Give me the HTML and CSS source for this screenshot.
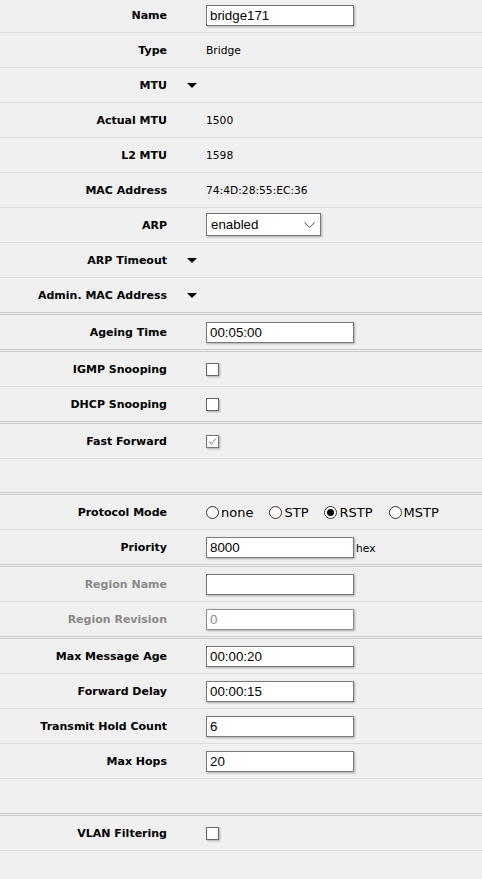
FILE: index.html
```html
<!DOCTYPE html>
<html>
<head>
<meta charset="utf-8">
<link rel="stylesheet" href="styles.css">
</head>
<body>
<div class="form">
  <div class="group first">
    <div class="row"><div class="label">Name</div><div class="arrow"></div><div class="value"><input class="text" type="text" value="bridge171"></div></div>
    <div class="row"><div class="label">Type</div><div class="arrow"></div><div class="value"><span class="plain">Bridge</span></div></div>
    <div class="row"><div class="label">MTU</div><div class="arrow"><span class="tri"></span></div><div class="value"></div></div>
    <div class="row"><div class="label">Actual MTU</div><div class="arrow"></div><div class="value"><span class="plain">1500</span></div></div>
    <div class="row"><div class="label">L2 MTU</div><div class="arrow"></div><div class="value"><span class="plain">1598</span></div></div>
    <div class="row"><div class="label">MAC Address</div><div class="arrow"></div><div class="value"><span class="plain">74:4D:28:55:EC:36</span></div></div>
    <div class="row"><div class="label">ARP</div><div class="arrow"></div><div class="value">
      <div class="select"><span>enabled</span><svg class="chev" width="11" height="6" viewBox="0 0 11 6"><path d="M0.5 0.5 L5.5 5.5 L10.5 0.5" fill="none" stroke="#555" stroke-width="1"/></svg></div>
    </div></div>
    <div class="row"><div class="label">ARP Timeout</div><div class="arrow"><span class="tri"></span></div><div class="value"></div></div>
    <div class="row"><div class="label">Admin. MAC Address</div><div class="arrow"><span class="tri"></span></div><div class="value"></div></div>
  </div>
  <div class="group">
    <div class="row"><div class="label">Ageing Time</div><div class="arrow"></div><div class="value"><input class="text" type="text" value="00:05:00"></div></div>
  </div>
  <div class="group">
    <div class="row"><div class="label">IGMP Snooping</div><div class="arrow"></div><div class="value"><span class="check"></span></div></div>
    <div class="row"><div class="label">DHCP Snooping</div><div class="arrow"></div><div class="value"><span class="check"></span></div></div>
  </div>
  <div class="group">
    <div class="row"><div class="label">Fast Forward</div><div class="arrow"></div><div class="value"><span class="check checked"><svg width="11" height="11" viewBox="0 0 11 11"><path d="M2 5.5 L4.5 8 L9 2.5" fill="none" stroke="#9a9a9a" stroke-width="1.1"/></svg></span></div></div>
    <div class="row short"></div>
  </div>
  <div class="group">
    <div class="row"><div class="label">Protocol Mode</div><div class="arrow"></div><div class="value">
      <div class="radios">
        <span class="radio"><span class="dot"></span>none</span>
        <span class="radio"><span class="dot"></span>STP</span>
        <span class="radio"><span class="dot on"></span>RSTP</span>
        <span class="radio"><span class="dot"></span>MSTP</span>
      </div>
    </div></div>
    <div class="row"><div class="label">Priority</div><div class="arrow"></div><div class="value"><input class="text" type="text" value="8000"><span class="unit">hex</span></div></div>
  </div>
  <div class="group">
    <div class="row"><div class="label dim">Region Name</div><div class="arrow"></div><div class="value"><input class="text" type="text" value=""></div></div>
    <div class="row"><div class="label dim">Region Revision</div><div class="arrow"></div><div class="value"><input class="text disabled" type="text" value="0"></div></div>
  </div>
  <div class="group">
    <div class="row"><div class="label">Max Message Age</div><div class="arrow"></div><div class="value"><input class="text" type="text" value="00:00:20"></div></div>
    <div class="row"><div class="label">Forward Delay</div><div class="arrow"></div><div class="value"><input class="text" type="text" value="00:00:15"></div></div>
    <div class="row"><div class="label">Transmit Hold Count</div><div class="arrow"></div><div class="value"><input class="text" type="text" value="6"></div></div>
    <div class="row"><div class="label">Max Hops</div><div class="arrow"></div><div class="value"><input class="text" type="text" value="20"></div></div>
    <div class="row"></div>
  </div>
  <div class="group last">
    <div class="row"><div class="label">VLAN Filtering</div><div class="arrow"></div><div class="value"><span class="check"></span></div></div>
  </div>
</div>
</body>
</html>
```
FILE: styles.css
```css
html, body {
  margin: 0;
  padding: 0;
  background: #f0f0f0;
}
body {
  font-family: "DejaVu Sans", Verdana, sans-serif;
  color: #000;
}
.form {
  margin-top: -2px;
}
.group {
  border-top: 1px solid #c9c9c9;
  margin-top: 1px;
}
.group.first {
  border-top: none;
  margin-top: 0;
}
.row {
  display: grid;
  grid-template-columns: 167px 39px 1fr;
  align-items: center;
  height: 34px;
  border-bottom: 1px solid #dcdcdc;
}
.group .row:last-child {
  border-bottom-color: #c9c9c9;
}
.group.last .row:last-child {
  border-bottom-color: #dcdcdc;
}
.row.short {
  height: 33px;
}
.label {
  text-align: right;
  font-weight: bold;
  font-size: 11px;
  white-space: nowrap;
}
.label.dim {
  color: #8a8a8a;
}
.arrow {
  display: flex;
  align-items: center;
  padding-left: 20px;
  padding-top: 1px;
}
.tri {
  width: 0;
  height: 0;
  border-left: 5px solid transparent;
  border-right: 5px solid transparent;
  border-top: 5px solid #000;
}
.value {
  display: flex;
  align-items: center;
}
.plain {
  font-size: 10.7px;
}
.text {
  box-sizing: border-box;
  width: 148px;
  height: 21px;
  margin: 0;
  padding: 0 3px;
  border: 1px solid #7a7a7a;
  background: #fff;
  box-shadow: 1px 1px 2px rgba(0, 0, 0, 0.3);
  font-family: "Liberation Sans", Arial, sans-serif;
  font-size: 13.33px;
  color: #000;
  outline: none;
}
.text.disabled {
  color: #8a8a8a;
  border-color: #8f8f8f;
}
.unit {
  font-size: 10.7px;
  margin-left: 2px;
  padding-top: 2px;
}
.select {
  box-sizing: border-box;
  width: 115px;
  height: 23px;
  margin-top: -1px;
  border: 1px solid #7a7a7a;
  background: #fff;
  box-shadow: 1px 1px 2px rgba(0, 0, 0, 0.3);
  display: flex;
  align-items: center;
  justify-content: space-between;
  padding: 0 5px 0 4px;
  font-family: "Liberation Sans", Arial, sans-serif;
  font-size: 13.33px;
}
.chev {
  display: block;
}
.check {
  box-sizing: border-box;
  width: 13px;
  height: 13px;
  border: 1px solid #666;
  background: #fff;
  box-shadow: 1px 1px 2px rgba(0, 0, 0, 0.3);
  display: flex;
  align-items: center;
  justify-content: center;
}
.check.checked {
  border-color: #777;
}
.check svg {
  display: block;
}
.radios {
  display: flex;
  align-items: center;
  gap: 16px;
  font-size: 13px;
}
.radio {
  display: flex;
  align-items: center;
  gap: 2px;
}
.dot {
  box-sizing: border-box;
  width: 13px;
  height: 13px;
  border: 1px solid #333;
  border-radius: 50%;
  background: #fff;
  display: flex;
  align-items: center;
  justify-content: center;
}
.dot.on::after {
  content: "";
  width: 7px;
  height: 7px;
  border-radius: 50%;
  background: #000;
}
```
